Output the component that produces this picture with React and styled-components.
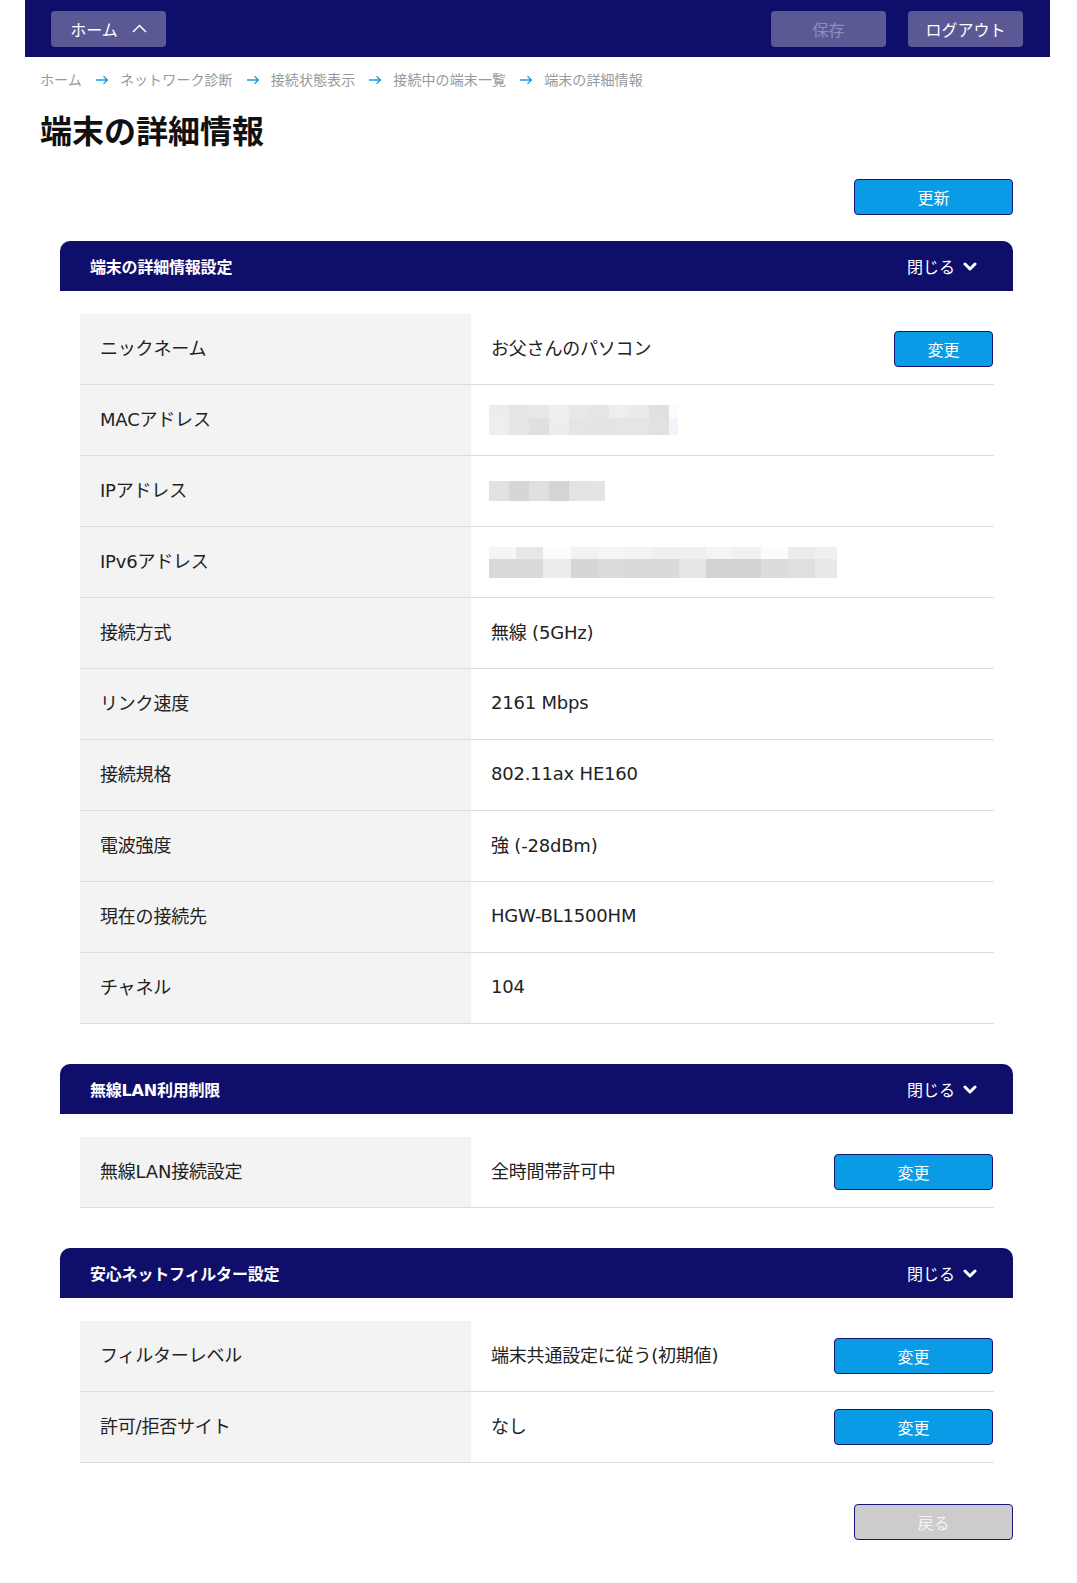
import React from "react";
import styled, { createGlobalStyle } from "styled-components";

const GlobalStyle = createGlobalStyle`
  body {
    margin: 0;
    background: #ffffff;
    font-family: "DejaVu Sans", "Noto Sans CJK JP", sans-serif;
    color: #222222;
  }
`;

const Page = styled.div`
  width: 1025px;
  margin-left: 25px;
  padding-bottom: 44px;
`;

const TopBar = styled.header`
  height: 57px;
  background: #0f0f6b;
  display: flex;
  align-items: center;
  padding: 0 27px 0 26px;
  gap: 22px;
`;

const BarButton = styled.button`
  width: 115px;
  height: 36px;
  border: none;
  border-radius: 4px;
  background: #5a5996;
  color: ${(p) => (p.$disabled ? "#8e8dbd" : "#ffffff")};
  font-family: inherit;
  font-size: 16px;
  display: flex;
  align-items: center;
  justify-content: center;
  gap: 14px;
  padding: 0;
  margin-left: ${(p) => (p.$pushRight ? "auto" : "0")};
`;

const Main = styled.main`
  padding: 0 15px;
`;

const Crumbs = styled.nav`
  margin-top: 13px;
  display: flex;
  align-items: center;
  font-size: 14px;
  line-height: 20px;
  letter-spacing: 0.1px;
  color: #999999;
`;

const CrumbArrow = styled.svg`
  margin: 0 11px 0 13px;
`;

const Title = styled.h1`
  margin: 19px 0 0;
  font-size: 32px;
  line-height: 46px;
  font-weight: 700;
  color: #111111;
`;

const Content = styled.div`
  padding: 0 22px 0 20px;
`;

const ActionRow = styled.div`
  display: flex;
  justify-content: flex-end;
  margin-top: ${(p) => p.$top || "24px"};
`;

const Button = styled.button`
  width: ${(p) => p.$w || "159px"};
  height: 36px;
  border: 1px solid #15157a;
  border-radius: 4px;
  background: ${(p) => (p.$gray ? "#cccccc" : "#0a9be6")};
  color: ${(p) => (p.$gray ? "#f4f4f4" : "#ffffff")};
  font-family: inherit;
  font-size: 16px;
  padding: 0;
  flex-shrink: 0;
`;

const Section = styled.section`
  margin-top: ${(p) => p.$top || "40px"};
`;

const SectionHead = styled.div`
  height: 50px;
  background: #0f0f6b;
  border-radius: 10px 10px 0 0;
  display: flex;
  align-items: center;
  justify-content: space-between;
  padding: 0 36px 0 30px;
  color: #ffffff;
`;

const SectionTitle = styled.h2`
  margin: 0;
  font-size: 16px;
  font-weight: 700;
  letter-spacing: -0.2px;
`;

const Toggle = styled.span`
  display: flex;
  align-items: center;
  gap: 8px;
  font-size: 16px;
`;

const Table = styled.div`
  margin: 23px 19px 0 20px;
`;

const Row = styled.div`
  display: grid;
  grid-template-columns: 391px 1fr;
  height: 71px;
  border-bottom: 1px solid #dddddd;
  box-sizing: border-box;
  font-size: 18px;
`;

const Label = styled.div`
  background: #f3f3f3;
  display: flex;
  align-items: center;
  padding-left: 20px;
  color: #222222;
`;

const Value = styled.div`
  display: flex;
  align-items: center;
  justify-content: space-between;
  padding: 0 1px 0 20px;
  color: #222222;
`;

const CellText = styled.span`
  padding-bottom: 4px;
  letter-spacing: -0.2px;
`;

const Arrow = () => (
  <CrumbArrow width="14" height="10" viewBox="0 0 14 10">
    <path d="M1 5h11.5M8.5 1.2L12.5 5l-4 3.8" fill="none" stroke="#1d9be5" strokeWidth="1.3" />
  </CrumbArrow>
);

const ChevronDown = () => (
  <svg width="14" height="9" viewBox="0 0 14 9">
    <polyline points="2,2 7,7 12,2" fill="none" stroke="#ffffff" strokeWidth="3" strokeLinecap="round" strokeLinejoin="round" />
  </svg>
);

const ChevronUp = () => (
  <svg width="15" height="9" viewBox="0 0 15 9">
    <polyline points="1,8 7.5,1.5 14,8" fill="none" stroke="#ffffff" strokeWidth="1.5" />
  </svg>
);

// ぼかし（モザイク）表示
const Mosaic = ({ widths, heights, colors }) => {
  const total = widths.reduce((a, b) => a + b, 0);
  const h = heights.reduce((a, b) => a + b, 0);
  let y = 0;
  return (
    <svg width={total} height={h} style={{ display: "block", marginLeft: "-2px" }}>
      {heights.map((rh, r) => {
        let x = 0;
        const rects = widths.map((w, c) => {
          const el = <rect key={c} x={x} y={y} width={w} height={rh} fill={colors[r][c]} />;
          x += w;
          return el;
        });
        y += rh;
        return <g key={r}>{rects}</g>;
      })}
    </svg>
  );
};

const macMosaic = (
  <Mosaic
    widths={[20, 20, 20, 20, 20, 20, 20, 20, 20, 9]}
    heights={[13, 17]}
    colors={[
      ["#ececec", "#e4e5e6", "#e8e8e8", "#efefef", "#e8e8e8", "#e4e5e7", "#eeeeee", "#eceae8", "#e0e0e0", "#fafcff"],
      ["#eeeeee", "#e5e6e6", "#e0e0e0", "#ededeb", "#e6e5e3", "#e3e4e6", "#e5e5e6", "#e5e5e6", "#e2e1df", "#f1f5fa"],
    ]}
  />
);

const ipMosaic = (
  <Mosaic
    widths={[20, 20, 20, 20, 20, 16]}
    heights={[20]}
    colors={[["#e2e2e2", "#d6d6d6", "#e0e0e0", "#d4d4d4", "#e2e3e2", "#e4e4e4"]]}
  />
);

const ipv6Mosaic = (
  <Mosaic
    widths={[27, 27, 28, 27, 27, 27, 27, 27, 27, 28, 27, 27, 22]}
    heights={[12, 19]}
    colors={[
      ["#f5f5f5", "#e7e7e7", "#fcfcfc", "#f2f2f2", "#f5f5f5", "#f3f3f1", "#efefef", "#efefef", "#f4f4f4", "#f1f1f1", "#fcfcfc", "#ececec", "#eff1f0"],
      ["#d9d9d9", "#dadad8", "#ececec", "#d6d6d8", "#dcdbd9", "#d9d9d9", "#dadada", "#e6e6e4", "#d3d3d3", "#d3d3d3", "#dcdcdc", "#dfdfdf", "#e8eae9"],
    ]}
  />
);

const deviceRows = [
  { label: "ニックネーム", value: "お父さんのパソコン", button: "99px" },
  { label: "MACアドレス", value: macMosaic, raw: true },
  { label: "IPアドレス", value: ipMosaic, raw: true },
  { label: "IPv6アドレス", value: ipv6Mosaic, raw: true },
  { label: "接続方式", value: "無線 (5GHz)" },
  { label: "リンク速度", value: "2161 Mbps" },
  { label: "接続規格", value: "802.11ax HE160" },
  { label: "電波強度", value: "強 (-28dBm)" },
  { label: "現在の接続先", value: "HGW-BL1500HM" },
  { label: "チャネル", value: "104" },
];

const wlanRows = [{ label: "無線LAN接続設定", value: "全時間帯許可中", button: "159px" }];

const filterRows = [
  { label: "フィルターレベル", value: "端末共通設定に従う(初期値)", button: "159px" },
  { label: "許可/拒否サイト", value: "なし", button: "159px" },
];

const crumbs = ["ホーム", "ネットワーク診断", "接続状態表示", "接続中の端末一覧", "端末の詳細情報"];

const Panel = ({ title, rows, top }) => (
  <Section $top={top}>
    <SectionHead>
      <SectionTitle>{title}</SectionTitle>
      <Toggle>
        閉じる
        <ChevronDown />
      </Toggle>
    </SectionHead>
    <Table>
      {rows.map((r) => (
        <Row key={r.label}>
          <Label>
            <CellText>{r.label}</CellText>
          </Label>
          <Value>
            {r.raw ? r.value : <CellText>{r.value}</CellText>}
            {r.button && <Button $w={r.button}>変更</Button>}
          </Value>
        </Row>
      ))}
    </Table>
  </Section>
);

export default function App() {
  return (
    <>
      <GlobalStyle />
      <Page>
        <TopBar>
          <BarButton>
            ホーム
            <ChevronUp />
          </BarButton>
          <BarButton $pushRight $disabled>
            保存
          </BarButton>
          <BarButton>ログアウト</BarButton>
        </TopBar>
        <Main>
          <Crumbs>
            {crumbs.map((c, i) => (
              <React.Fragment key={c}>
                {i > 0 && <Arrow />}
                <span>{c}</span>
              </React.Fragment>
            ))}
          </Crumbs>
          <Title>端末の詳細情報</Title>
          <Content>
            <ActionRow>
              <Button>更新</Button>
            </ActionRow>
            <Panel title="端末の詳細情報設定" rows={deviceRows} top="26px" />
            <Panel title="無線LAN利用制限" rows={wlanRows} />
            <Panel title="安心ネットフィルター設定" rows={filterRows} />
            <ActionRow $top="41px">
              <Button $gray>戻る</Button>
            </ActionRow>
          </Content>
        </Main>
      </Page>
    </>
  );
}
